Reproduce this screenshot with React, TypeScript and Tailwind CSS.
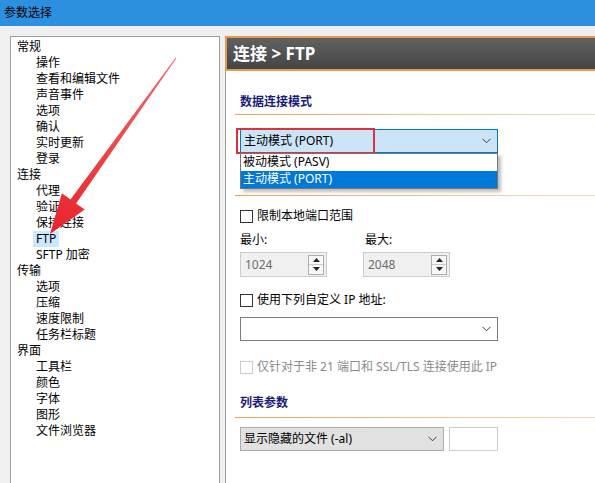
import React from "react";

type Node = { label: string; children: string[] };

const tree: Node[] = [
  { label: "常规", children: ["操作", "查看和编辑文件", "声音事件", "选项", "确认", "实时更新", "登录"] },
  { label: "连接", children: ["代理", "验证", "保持连接", "FTP", "SFTP 加密"] },
  { label: "传输", children: ["选项", "压缩", "速度限制", "任务栏标题"] },
  { label: "界面", children: ["工具栏", "颜色", "字体", "图形", "文件浏览器"] },
];

const font = { fontFamily: '"Noto Sans", "Noto Sans CJK SC", sans-serif' };

function Chevron() {
  return (
    <svg width="9" height="6" viewBox="0 0 9 6" className="shrink-0">
      <polyline points="0.5,0.8 4.5,4.8 8.5,0.8" fill="none" stroke="#3c3c3c" strokeWidth="1" />
    </svg>
  );
}

function Checkbox({ label, disabled }: { label: string; disabled?: boolean }) {
  return (
    <div className="flex h-[16px] items-center gap-[4px]">
      <div
        className={
          disabled
            ? "h-[13px] w-[13px] border border-[#cccccc] bg-white"
            : "h-[13px] w-[13px] border border-[#333333] bg-white"
        }
      />
      <span className={disabled ? "text-[#8a8a8a]" : "text-black"}>{label}</span>
    </div>
  );
}

function Spin({ value }: { value: string }) {
  return (
    <div className="flex h-[25px] w-[87px] items-center justify-between border border-[#cccccc] bg-[#f0f0f0] pl-[4px] pr-[2px] text-[#6d6d6d]">
      <span>{value}</span>
      <div className="flex h-[20px] w-[16px] flex-col border border-[#adadad] bg-[#f7f7f7]">
        <div className="flex flex-1 items-center justify-center border-b border-[#c8c8c8]">
          <svg width="7" height="4" viewBox="0 0 7 4">
            <polygon points="3.5,0 7,4 0,4" fill="#222" />
          </svg>
        </div>
        <div className="flex flex-1 items-center justify-center">
          <svg width="7" height="4" viewBox="0 0 7 4">
            <polygon points="0,0 7,0 3.5,4" fill="#222" />
          </svg>
        </div>
      </div>
    </div>
  );
}

function Separator() {
  return <div className="ml-[-5px] h-px bg-gradient-to-r from-[#e9a24e] to-[#f6dcb8]" />;
}

export default function App() {
  return (
    <div
      className="relative flex h-[483px] w-[595px] flex-col overflow-hidden bg-[#f0f0f0] text-[12px] leading-[16px] text-black"
      style={font}
    >
      <div className="flex h-[26px] shrink-0 items-center bg-[#2d8fe0] pl-[4px]">参数选择</div>

      <div className="flex flex-1 pl-[10px] pt-[10px]">
        <div className="h-[470px] w-[210px] shrink-0 border border-[#a0a0a0] bg-white pl-[6px] pt-[2px]">
          {tree.map((node) => (
            <div key={node.label}>
              <div className="h-[16px]">{node.label}</div>
              {node.children.map((c) => (
                <div key={c} className="h-[16px] pl-[19px]">
                  {c === "FTP" ? (
                    <span className="ml-[-3px] inline-block bg-[#cce8ff] px-[3px]">FTP</span>
                  ) : (
                    c
                  )}
                </div>
              ))}
            </div>
          ))}
        </div>

        <div className="ml-[5px] flex flex-1 flex-col">
          <div className="flex h-[35px] shrink-0 items-center border-2 border-r-0 border-[#e69a4a] bg-gradient-to-b from-[#616161] to-[#454545] pl-[6px] text-[17px] font-bold text-white">
            连接 &gt; FTP
          </div>
          <div className="flex-1 border-l border-[#a0a0a0] bg-white pl-[14px]">
            <div className="mt-[23px] h-[16px] font-bold text-[#1b1b7a]">数据连接模式</div>
            <div className="mt-[4px]">
              <Separator />
            </div>

            <div className="relative mt-[14px] w-[258px]">
              <div className="flex h-[24px] items-center justify-between border border-[#0078d7] bg-[#cce4f7] pl-[3px] pr-[6px]">
                <span>主动模式 (PORT)</span>
                <Chevron />
              </div>
              <div className="absolute left-0 top-full z-10 w-[258px] border border-[#767676] bg-white shadow-[3px_3px_3px_rgba(0,0,0,0.25)]">
                <div className="h-[17px] pl-[2px]">被动模式 (PASV)</div>
                <div className="h-[17px] bg-[#0078d7] pl-[2px] text-white">主动模式 (PORT)</div>
              </div>
              <div className="pointer-events-none absolute left-[-4px] top-[-1px] h-[26px] w-[139px] border-2 border-[#e0313b]" />
            </div>

            <div className="mt-[42px]">
              <Separator />
            </div>

            <div className="mt-[12px]">
              <Checkbox label="限制本地端口范围" />
            </div>
            <div className="mt-[8px] flex">
              <span className="w-[125px]">最小:</span>
              <span>最大:</span>
            </div>
            <div className="mt-[4px] flex gap-[36px]">
              <Spin value="1024" />
              <Spin value="2048" />
            </div>

            <div className="mt-[15px]">
              <Checkbox label="使用下列自定义 IP 地址:" />
            </div>
            <div className="mt-[9px] flex h-[24px] w-[258px] items-center justify-end border border-[#7a7a7a] bg-white pr-[6px]">
              <Chevron />
            </div>

            <div className="mt-[18px]">
              <Checkbox label="仅针对于非 21 端口和 SSL/TLS 连接使用此 IP" disabled />
            </div>

            <div className="mt-[20px] h-[16px] font-bold text-[#1b1b7a]">列表参数</div>
            <div className="mt-[6px]">
              <Separator />
            </div>
            <div className="mt-[9px] flex gap-[5px]">
              <div className="flex h-[24px] w-[204px] items-center justify-between border border-[#adadad] bg-[#e1e1e1] pl-[3px] pr-[6px]">
                <span>显示隐藏的文件 (-al)</span>
                <Chevron />
              </div>
              <div className="h-[24px] w-[49px] border border-[#cccccc] bg-white" />
            </div>
          </div>
        </div>
      </div>

      <svg className="pointer-events-none absolute left-0 top-0" width="595" height="483" viewBox="0 0 595 483">
        <defs>
          <linearGradient id="arr" x1="176" y1="58" x2="50" y2="234" gradientUnits="userSpaceOnUse">
            <stop offset="0" stopColor="#f06a6a" />
            <stop offset="1" stopColor="#e8232b" />
          </linearGradient>
        </defs>
        <polygon
          points="175.6,57.7 176.4,58.3 76.1,203.4 84.7,209.6 50,234 61.9,193.2 70.5,199.4"
          fill="url(#arr)"
        />
      </svg>
    </div>
  );
}
